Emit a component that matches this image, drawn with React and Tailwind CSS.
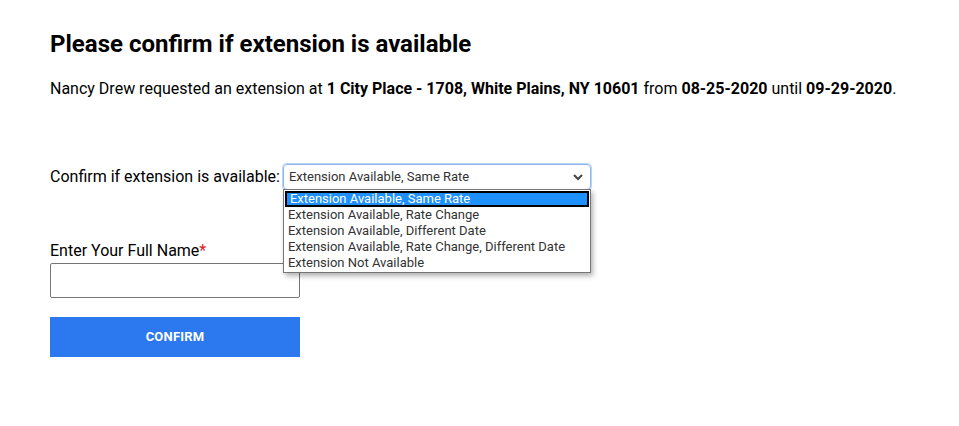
import React from "react";

const options = [
  "Extension Available, Same Rate",
  "Extension Available, Rate Change",
  "Extension Available, Different Date",
  "Extension Available, Rate Change, Different Date",
  "Extension Not Available",
];

export default function App() {
  return (
    <div className="min-h-[426px] bg-white text-black" style={{ fontFamily: "Roboto, 'Liberation Sans', sans-serif" }}>
      <div className="px-[50px] pt-[29px]">
        <h1 className="text-[24px] font-bold leading-[30px]">Please confirm if extension is available</h1>
        <p className="mt-[18px] text-[16px] leading-[24px]">
          Nancy Drew requested an extension at <b>1 City Place - 1708, White Plains, NY 10601</b> from <b>08-25-2020</b> until <b>09-29-2020</b>.
        </p>
        <div className="mt-[63px] flex items-center">
          <span className="text-[16px] leading-[24px]">Confirm if extension is available:</span>
          <div className="relative ml-[3px]">
            <div className="flex h-[26px] w-[308px] items-center justify-between rounded-[4px] border border-[#8fb8ef] pl-[5px] pr-[6px] text-[13px] text-[#333] shadow-[0_0_0_1px_#b7d3f7]">
              <span>Extension Available, Same Rate</span>
              <svg width="12" height="8" viewBox="0 0 12 8"><path d="M2 2l4 4 4-4" fill="none" stroke="#444" strokeWidth="2" /></svg>
            </div>
            <div className="absolute left-0 top-[25px] z-10 w-[308px] border border-[#767676] bg-white py-[1px] shadow-[2px_3px_5px_rgba(0,0,0,0.3)]">
              {options.map((o, i) => (
                <div
                  key={o}
                  className={
                    i === 0
                      ? "mx-[1px] h-[16px] border-2 border-black bg-[#1e90ff] pl-[3px] text-[13px] leading-[12px] text-white"
                      : "h-[16px] pl-[4px] text-[13px] leading-[16px] text-[#333]"
                  }
                >
                  {o}
                </div>
              ))}
            </div>
          </div>
        </div>
        <div className="mt-[49px] text-[16px] leading-[24px]">
          Enter Your Full Name<span className="text-[#e02020]">*</span>
        </div>
        <input className="block h-[35px] w-[250px] rounded-[2px] border border-[#767676]" />
        <button className="mt-[19px] flex h-[40px] w-[250px] items-center justify-center bg-[#2c78ee] text-[13px] font-bold tracking-[0.2px] text-white">
          CONFIRM
        </button>
      </div>
    </div>
  );
}
